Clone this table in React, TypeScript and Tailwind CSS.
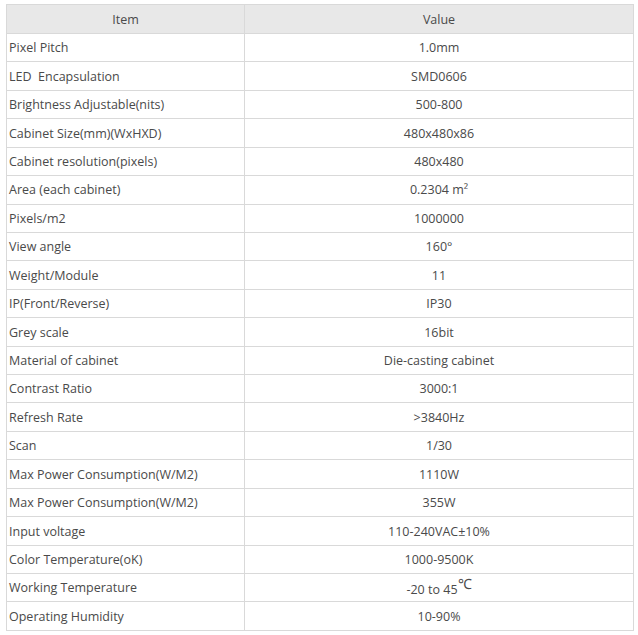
const rows: [string, React.ReactNode][] = [
  ['Pixel Pitch', '1.0mm'],
  ['LED\u00a0 Encapsulation', 'SMD0606'],
  ['Brightness Adjustable(nits)', '500-800'],
  ['Cabinet Size(mm)(WxHXD)', '480x480x86'],
  ['Cabinet resolution(pixels)', '480x480'],
  ['Area (each cabinet)', '0.2304 m²'],
  ['Pixels/m2', '1000000'],
  ['View angle', '160°'],
  ['Weight/Module', '11'],
  ['IP(Front/Reverse)', 'IP30'],
  ['Grey scale', '16bit'],
  ['Material of cabinet', 'Die-casting cabinet'],
  ['Contrast Ratio', '3000:1'],
  ['Refresh Rate', '>3840Hz'],
  ['Scan', '1/30'],
  ['Max Power Consumption(W/M2)', '1110W'],
  ['Max Power Consumption(W/M2)', '355W'],
  ['Input voltage', '110-240VAC±10%'],
  ['Color Temperature(oK)', '1000-9500K'],
  [
    'Working Temperature',
    <>
      -20 to 45<span className="relative -top-[5px] text-[14px] font-light">℃</span>
    </>,
  ],
  ['Operating Humidity', '10-90%'],
];

export default function App() {
  return (
    <div className="bg-white w-[638px] h-[635px] pt-[4px] pl-[6px] font-['Open_Sans',sans-serif] text-[12.5px] text-[#4a4a4a]">
      <table className="w-[628px] border-collapse table-fixed">
        <colgroup>
          <col className="w-[238px]" />
          <col />
        </colgroup>
        <thead>
          <tr className="h-[29px] bg-[#e8e8e8]">
            <th className="border border-[#d9d9d9] pt-[2px] font-normal text-center">Item</th>
            <th className="border border-[#d9d9d9] pt-[2px] font-normal text-center">Value</th>
          </tr>
        </thead>
        <tbody>
          {rows.map(([item, value], i) => (
            <tr key={i} className="h-[28.43px]">
              <td className="border border-[#d9d9d9] pt-[2px] pl-[2px] text-left whitespace-nowrap">{item}</td>
              <td className="border border-[#d9d9d9] pt-[2px] text-center whitespace-nowrap">{value}</td>
            </tr>
          ))}
        </tbody>
      </table>
    </div>
  );
}
